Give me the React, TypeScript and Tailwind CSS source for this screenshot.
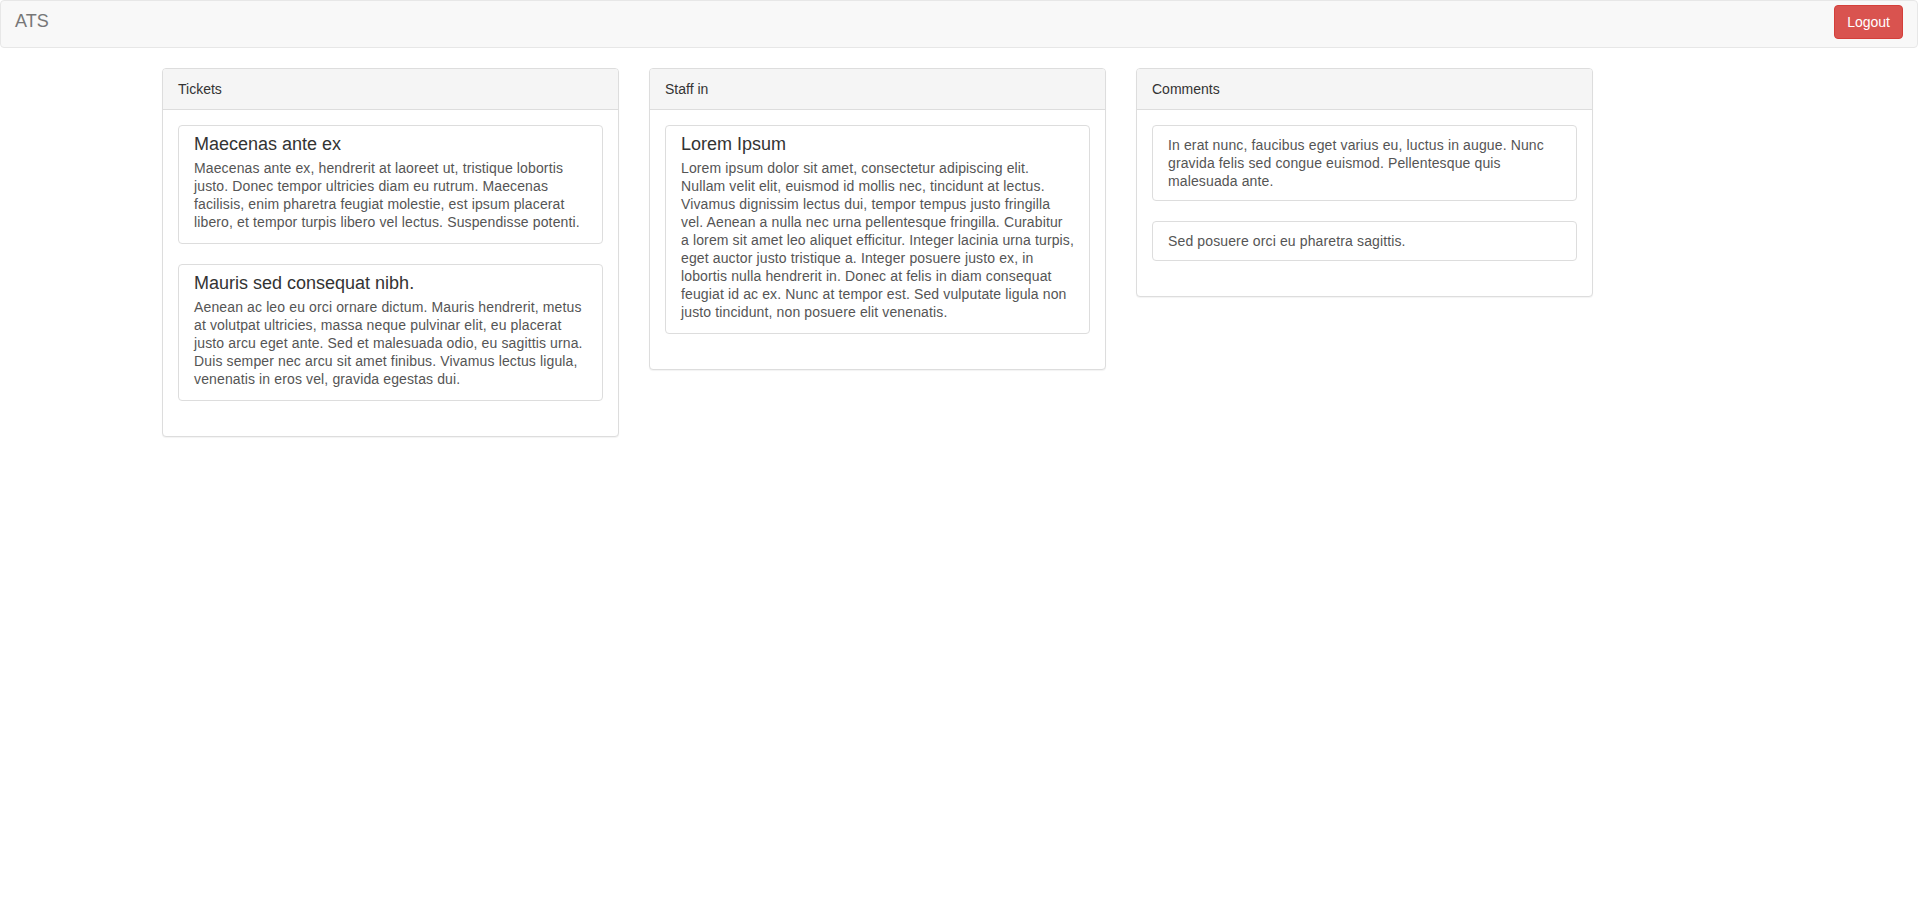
import React from "react";

const font = { fontFamily: '"Liberation Sans", Arial, Helvetica, sans-serif' };

function Panel({ title, children }: { title: string; children: React.ReactNode }) {
  return (
    <div className="w-[457px] shrink-0 border border-[#ddd] rounded-[4px] bg-white shadow-[0_1px_1px_rgba(0,0,0,0.05)]">
      <div className="px-[15px] py-[10px] bg-[#f5f5f5] border-b border-[#ddd] rounded-t-[3px] text-[14px] leading-[20px] text-[#333]">
        {title}
      </div>
      <div className="p-[15px] pb-[15px]">{children}</div>
    </div>
  );
}

function Item({ title, text }: { title: string; text: string }) {
  return (
    <div className="mb-[20px] border border-[#ddd] rounded-[4px] px-[15px] pt-[8px] pb-[12px]">
      <h4 className="text-[18px] leading-[20px] text-[#333] mb-[5px]">{title}</h4>
      <p className="text-[14px] leading-[18px] tracking-[0.13px] text-[#555]">{text}</p>
    </div>
  );
}

function Comment({ text }: { text: string }) {
  return (
    <div className="mb-[20px] border border-[#ddd] rounded-[4px] px-[15px] pt-[10px] pb-[10px]">
      <p className="text-[14px] leading-[18px] tracking-[0.13px] text-[#555]">{text}</p>
    </div>
  );
}

export default function App() {
  return (
    <div style={font} className="min-h-[903px] bg-white text-[14px] text-[#333]">
      <nav className="h-[48px] bg-[#f8f8f8] border border-[#e7e7e7] rounded-[4px] flex items-start justify-between">
        <div className="pl-[14px] pt-[10px] text-[18px] leading-[20px] text-[#777]">ATS</div>
        <button className="mt-[4px] mr-[14px] h-[34px] px-[12px] bg-[#d9534f] border border-[#d43f3a] rounded-[4px] text-white text-[14px] leading-[20px]">
          Logout
        </button>
      </nav>
      <div className="mt-[20px] pl-[162px] flex items-start gap-[30px]">
        <Panel title="Tickets">
          <Item
            title="Maecenas ante ex"
            text="Maecenas ante ex, hendrerit at laoreet ut, tristique lobortis justo. Donec tempor ultricies diam eu rutrum. Maecenas facilisis, enim pharetra feugiat molestie, est ipsum placerat libero, et tempor turpis libero vel lectus. Suspendisse potenti."
          />
          <Item
            title="Mauris sed consequat nibh."
            text="Aenean ac leo eu orci ornare dictum. Mauris hendrerit, metus at volutpat ultricies, massa neque pulvinar elit, eu placerat justo arcu eget ante. Sed et malesuada odio, eu sagittis urna. Duis semper nec arcu sit amet finibus. Vivamus lectus ligula, venenatis in eros vel, gravida egestas dui."
          />
        </Panel>
        <Panel title="Staff in">
          <Item
            title="Lorem Ipsum"
            text="Lorem ipsum dolor sit amet, consectetur adipiscing elit. Nullam velit elit, euismod id mollis nec, tincidunt at lectus. Vivamus dignissim lectus dui, tempor tempus justo fringilla vel. Aenean a nulla nec urna pellentesque fringilla. Curabitur a lorem sit amet leo aliquet efficitur. Integer lacinia urna turpis, eget auctor justo tristique a. Integer posuere justo ex, in lobortis nulla hendrerit in. Donec at felis in diam consequat feugiat id ac ex. Nunc at tempor est. Sed vulputate ligula non justo tincidunt, non posuere elit venenatis."
          />
        </Panel>
        <Panel title="Comments">
          <Comment text="In erat nunc, faucibus eget varius eu, luctus in augue. Nunc gravida felis sed congue euismod. Pellentesque quis malesuada ante." />
          <Comment text="Sed posuere orci eu pharetra sagittis." />
        </Panel>
      </div>
    </div>
  );
}
